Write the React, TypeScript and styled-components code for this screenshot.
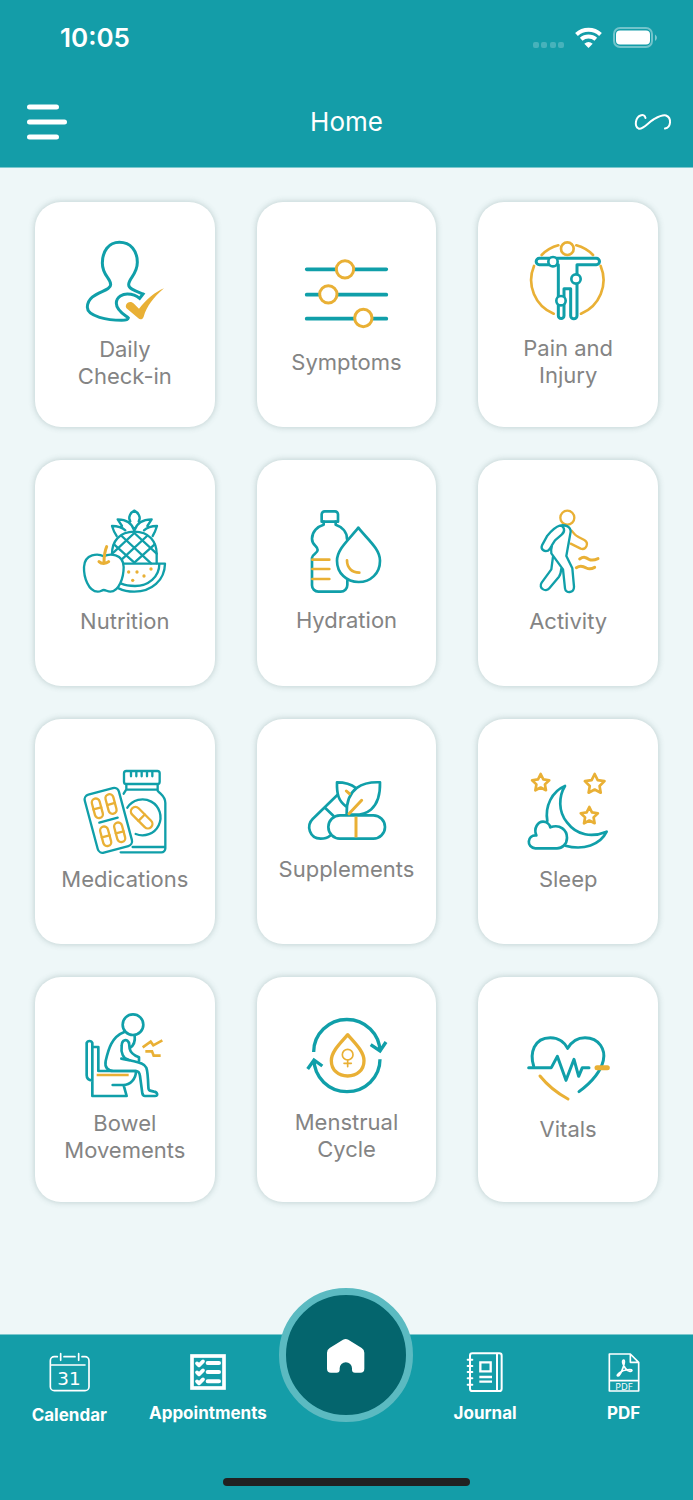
import React from "react";
import styled, { createGlobalStyle } from "styled-components";

const color = {
  teal: "#149da8",
  line: "#109fa9",
  amber: "#e9b035",
  deep: "#04656d",
  ring: "#5bbac1",
  page: "#eef7f8",
  label: "#848484",
  edge: "#7cc8ce",
};

const GlobalStyle = createGlobalStyle`
  * { box-sizing: border-box; }
  body {
    margin: 0;
    background: ${color.page};
    font-family: Inter, "Liberation Sans", sans-serif;
  }
`;

const Screen = styled.div`
  display: flex;
  flex-direction: column;
  min-height: 100vh;
`;

const Header = styled.header`
  background: ${color.teal};
  border-bottom: 1px solid ${color.edge};
  color: #fff;
`;

const StatusBar = styled.div`
  display: flex;
  align-items: center;
  justify-content: space-between;
  height: 76px;
  padding: 0 36px 0 60px;
`;

const Clock = styled.time`
  font-size: 26px;
  font-weight: 600;
  line-height: 32px;
`;

const StatusIcons = styled.div`
  display: flex;
  align-items: center;
  gap: 11px;
`;

const Toolbar = styled.div`
  display: grid;
  grid-template-columns: 1fr auto 1fr;
  align-items: center;
  height: 91px;
  padding: 0 21px;
`;

const IconButton = styled.button<{ $end?: boolean }>`
  display: flex;
  justify-self: ${(p) => (p.$end ? "end" : "start")};
  padding: 0;
  border: 0;
  background: none;
  color: inherit;
  cursor: pointer;
`;

const Title = styled.h1`
  margin: 0;
  font-size: 26px;
  font-weight: 400;
  line-height: 32px;
`;

const Main = styled.main`
  display: flex;
  flex: 1;
  padding: 34px 35px 132px;
`;

const CardGrid = styled.div`
  display: grid;
  flex: 1;
  grid-template-columns: repeat(3, minmax(0, 1fr));
  grid-auto-rows: 1fr;
  gap: 33px 42px;
`;

const Card = styled.button`
  display: flex;
  flex-direction: column;
  align-items: center;
  justify-content: center;
  gap: 12px;
  min-height: 200px;
  padding: 0 20px;
  border: 0;
  border-radius: 26px;
  background: #fff;
  box-shadow: 0 0 6px rgba(60, 100, 100, 0.3);
  color: ${color.label};
  font-family: inherit;
  font-size: 22px;
  line-height: 27px;
  text-align: center;
  cursor: pointer;
`;

const CardLabel = styled.span`
  max-width: 140px;
`;

const Word = styled.span`
  white-space: nowrap;
`;

const Drawing = styled.svg<{ $light?: boolean }>`
  display: block;
  flex: none;
  overflow: visible;
  fill: none;
  stroke: ${(p) => (p.$light ? "#fff" : color.line)};
  stroke-width: 8;
  stroke-linecap: round;
  stroke-linejoin: round;
`;

const TabBar = styled.nav`
  height: 166px;
  background: ${color.teal};
  border-top: 1px solid ${color.edge};
  display: flex;
  flex-direction: column;
  justify-content: space-between;
  align-items: center;
  padding-bottom: 14px;
`;

const Tabs = styled.ul`
  display: grid;
  grid-template-columns: repeat(5, minmax(0, 1fr));
  width: 100%;
  margin: 0;
  padding: 0;
  list-style: none;
`;

const Tab = styled.li`
  position: relative;
  display: flex;
  justify-content: center;
`;

const TabLink = styled.a`
  display: flex;
  flex-direction: column;
  align-items: center;
  gap: 11px;
  padding-top: 17px;
  color: #fff;
  font-size: 17px;
  font-weight: 700;
  line-height: 20px;
  text-decoration: none;
`;

const HomeLink = styled.a`
  position: absolute;
  top: -47px;
  left: 50%;
  transform: translateX(-50%);
  display: flex;
  align-items: center;
  justify-content: center;
  width: 134px;
  height: 134px;
  border: 7px solid ${color.ring};
  border-radius: 50%;
  background: ${color.deep};
`;

const HomeIndicator = styled.div`
  width: 247px;
  height: 8px;
  border-radius: 4px;
  background: #212121;
`;

const Y = { stroke: color.amber };
const dot = { fill: color.amber, stroke: "none" };

const starPoints = (cx: number, cy: number, r: number) =>
  Array.from({ length: 10 }, (_, i) => {
    const radius = i % 2 ? r * 0.5 : r;
    const a = (Math.PI / 5) * i - Math.PI / 2;
    return `${(cx + radius * Math.cos(a)).toFixed(1)},${(cy + radius * Math.sin(a)).toFixed(1)}`;
  }).join(" ");

const Capsule = ({ x, y, w, h, angle }: { x: number; y: number; w: number; h: number; angle: number }) => (
  <g transform={`translate(${x} ${y}) rotate(${angle})`} {...Y}>
    <rect x={-w / 2} y={-h / 2} width={w} height={h} rx={w / 2} />
    <path d={`M${-w / 2} 0H${w / 2}`} />
  </g>
);

type Item = { label: string; viewBox: string; height: number; art: React.ReactNode };

const items: Item[] = [
  {
    label: "Daily Check-in",
    viewBox: "159 136 252 252",
    height: 84,
    art: (
      <>
        <path strokeWidth="9" strokeLinejoin="miter" d="M268 143C236 143 217 170 217 205C217 243 242 250 242 270C242 292 172 292 172 338C172 366 235 377 275 377C288 377 294 375 295 370C290 364 259 350 259 326C259 305 280 298 292 298C306 298 320 303 329 311L339 298C325 292 296 284 296 270C296 250 322 240 322 203C322 168 302 143 268 143Z" />
        <path fill={color.amber} stroke="none" d="M402 281C375 292 350 314 327 342L312 327C304 319 292 321 288 331C286 337 289 341 293 344L325 371C330 376 339 374 341 366C350 335 372 306 402 281Z" />
      </>
    ),
  },
  {
    label: "Symptoms",
    viewBox: "162 173 252 252",
    height: 84,
    art: (
      <>
        <path strokeWidth="11" d="M170 222H409M170 298H409M170 370H409" />
        <g fill="#fff" strokeWidth="9" {...Y}>
          <circle cx="285" cy="222" r="26" />
          <circle cx="235" cy="297" r="26" />
          <circle cx="340" cy="368" r="26" />
        </g>
      </>
    ),
  },
  {
    label: "Pain and Injury",
    viewBox: "162 138 252 246",
    height: 82,
    art: (
      <>
        <g {...Y}>
          <path d="M186 213A109 109 0 0 0 245 356M327 356A109 109 0 0 0 386 213M209 180A109 109 0 0 1 259 151M313 151A109 109 0 0 1 363 180" />
          <circle cx="286" cy="161" r="19" />
        </g>
        <path strokeWidth="9" d="M259 209V362a8.500 8.500 0 0 0 17 0V281H296V362a9.500 9.500 0 0 0 19 0V209H373a9.500 9.500 0 0 0 0-19H202a9.500 9.500 0 0 0 0 19Z" />
        <g fill="#fff">
          <circle cx="243" cy="200" r="14" />
          <circle cx="312" cy="252" r="14" />
          <circle cx="267" cy="317" r="14" />
        </g>
      </>
    ),
  },
  {
    label: "Nutrition",
    viewBox: "159 64 252 258",
    height: 86,
    art: (
      <g strokeWidth="7">
        <path d="M246 196C246 158 268 129 313 129C358 129 380 160 380 196V224" />
        <path d="M252 167L313 222M275 142L363 224M313 133L380 195M374 167L313 222M351 142L265 222M313 133L250 192" />
        <path d="M301 98C292 85 303 71 313 66C323 71 335 85 326 98M313 126C306 103 288 92 263 92L276 112M313 126C320 103 340 92 365 92L352 112M286 125C275 115 262 112 246 112C250 125 253 133 260 142M342 125C352 115 365 112 381 112C377 125 374 133 368 142" />
        <path d="M278 225H405C404 275 365 309 313 309C295 309 278 305 266 299M388 226C388 265 355 292 315 292C300 292 285 290 274 285" />
        <path fill="#fff" d="M221 203C205 194 164 194 162 235C161 265 175 309 203 309C213 309 215 304 221 304C228 304 232 309 241 309C268 309 281 265 281 235C280 194 238 194 221 203Z" />
        <path {...Y} strokeWidth="9" d="M230 174C224 188 222 200 222 222M207 219C214 226 228 226 236 219" />
        <g {...dot}>
          <circle cx="296" cy="250" r="5" />
          <circle cx="321" cy="250" r="5" />
          <circle cx="363" cy="241" r="5" />
          <circle cx="342" cy="262" r="5" />
          <circle cx="308" cy="275" r="5" />
        </g>
      </g>
    ),
  },
  {
    label: "Hydration",
    viewBox: "162 65 252 252",
    height: 84,
    art: (
      <>
        <path d="M215 97V75a9 9 0 0 1 9-9H255a9 9 0 0 1 9 9V97Z" />
        <path d="M221 97V106C203 111 186 127 186 148C186 170 203 168 203 182C203 192 186 196 186 205V288a19 19 0 0 0 19 19H272a20 20 0 0 0 20-20V274M257 97V106C275 112 291 127 291 149" />
        <path {...Y} d="M187 211H238M187 239H238M187 269H238M291 213C291 235 305 250 328 250" />
        <path d="M325 115C300 148 261 178 261 214C261 252 290 278 326 278C362 278 390 252 390 214C390 178 350 148 325 115Z" />
      </>
    ),
  },
  {
    label: "Activity",
    viewBox: "829 62 252 258",
    height: 86,
    art: (
      <g strokeWidth="7">
        <g {...Y}>
          <circle cx="953" cy="85" r="21" />
          <path d="M966 124C972 132 978 139 985 142L1004 152C1019 161 1010 183 993 178L963 163" />
          <path strokeWidth="9" d="M990 209C1003 200 1010 205 1018 210C1028 215 1036 212 1045 208M980 235C993 226 1002 231 1010 236C1018 240 1026 239 1035 234" />
        </g>
        <path d="M930 109C918 112 905 125 893 139L877 168C872 180 884 188 895 184C901 181 903 175 906 169L916 153L936 136C949 125 943 109 930 109C945 105 963 111 963 127L950 200L968 237L973 292C973 312 948 313 946 297L940 240L905 192C904 185 904 178 907 168" />
        <path d="M910 202L905 240L876 280C865 296 888 310 899 297L928 262C933 255 934 248 935 238" />
      </g>
    ),
  },
  {
    label: "Medications",
    viewBox: "159 59 252 252",
    height: 84,
    art: (
      <g strokeWidth="7">
        <rect x="282" y="62" width="107" height="39" rx="7" />
        <path d="M303 64V78M319 64V78M335 64V78M351 64V78M367 64V78" />
        <path d="M289 103V117L281 130M290 118H383M383 103V121C394 134 406 138 406 158V294a12 12 0 0 1-12 12H272M308 290H406" />
        <path d="M292 172A54 54 0 1 1 317 251" />
        <Capsule x={335} y={202} w={27} h={80} angle={-45} />
        <rect x="-53" y="-90" width="106" height="180" rx="15" transform="translate(235 210) rotate(-15)" />
        <path d="M208 217L263 202" />
        <Capsule x={202} y={174} w={24} h={60} angle={-15} />
        <Capsule x={243} y={161} w={24} h={60} angle={-15} />
        <Capsule x={227} y={258} w={24} h={60} angle={-15} />
        <Capsule x={269} y={246} w={24} h={60} angle={-15} />
      </g>
    ),
  },
  {
    label: "Supplements",
    viewBox: "822 90 252 195",
    height: 65,
    art: (
      <>
        <path d="M922 138L848 210C828 230 838 268 872 269C885 269 893 266 900 260M885 176L910 200" />
        <rect x="895" y="199" width="170" height="70" rx="35" />
        <path {...Y} strokeLinecap="butt" strokeWidth="9" d="M978 203V265" />
        <path d="M1050 100C1000 98 948 115 950 195C1010 205 1052 180 1050 100ZM978 117C960 103 940 100 921 100C920 135 925 155 948 172" />
        <path {...Y} strokeWidth="9" d="M957 194L995 154M949 126L958 134" />
      </>
    ),
  },
  {
    label: "Sleep",
    viewBox: "162 61 252 252",
    height: 84,
    art: (
      <>
        <path d="M226 214C218 170 240 125 279 109C260 140 258 185 285 218C315 258 360 264 404 246C385 285 335 303 280 288" />
        <path d="M190 296C162 294 165 255 193 257C184 235 198 216 213 216C225 216 233 225 235 233C265 222 285 242 285 264C285 284 270 296 255 296Z" />
        <g {...Y}>
          <polygon points={starPoints(206, 100, 27)} />
          <polygon points={starPoints(368, 104, 31)} />
          <polygon points={starPoints(352, 199, 27)} />
        </g>
      </>
    ),
  },
  {
    label: "Bowel Movements",
    viewBox: "159 44 252 252",
    height: 84,
    art: (
      <>
        <circle cx="309" cy="76" r="31" />
        <path d="M187 243C175 243 170 238 170 228V131a9 9 0 0 1 17 0V290H290L281 258M187 143H205V215H318C318 240 300 257 280 257H248" />
        <path d="M283 98C245 112 235 150 227 185C223 205 235 215 250 215H318C328 215 329 222 330 230L337 282C338 288 340 290 345 290H375C386 290 382 278 372 277L360 274C355 272 355 268 355 262C354 235 353 215 349 205C343 190 318 188 300 183L274 178" />
        <path d="M297 132C293 117 275 120 275 140C272 160 280 178 294 181M297 130L299 148C302 162 312 168 327 174V184M314 109C316 125 312 138 300 146" />
        <path {...Y} strokeLinecap="butt" strokeLinejoin="miter" d="M200 227H296M338 144L362 127L370 138L397 123M346 156H366L371 169H392" />
      </>
    ),
  },
  {
    label: "Menstrual Cycle",
    viewBox: "162 50 252 243",
    height: 81,
    art: (
      <>
        <path strokeWidth="10" strokeLinecap="butt" strokeLinejoin="miter" d="M191 158A99 97 0 0 1 390 158M390 180A99 97 0 0 1 192 180M362 136L390 155L408 128M173 209L192 182L217 200" />
        <path {...Y} strokeWidth="10" d="M293 106C275 128 244 155 244 184C244 212 265 230 293 230C321 230 342 212 342 184C342 155 311 128 293 106Z" />
        <g {...Y} strokeWidth="5">
          <circle cx="293" cy="166" r="16" />
          <path d="M293 182V202M282 192H304" />
        </g>
      </>
    ),
  },
  {
    label: "Vitals",
    viewBox: "829 112 252 204",
    height: 68,
    art: (
      <>
        <path strokeWidth="9" d="M852 202C840 165 852 117 902 117C930 117 947 135 954 149C962 135 978 117 1006 117C1050 117 1068 155 1061 185C1052 225 1020 255 988 279" />
        <path strokeWidth="9" d="M837 207H905L923 173L949 245L973 182L987 233L998 207H1018" />
        <path {...Y} strokeWidth="9" d="M871 232C895 262 920 282 955 301" />
        <path {...Y} strokeWidth="15" d="M1042 207H1073" />
      </>
    ),
  },
];

type TabItem = { label: string; viewBox: string; size: number; art: React.ReactNode };

const leftTabs: TabItem[] = [
  {
    label: "Calendar",
    viewBox: "145 216 126 126",
    size: 42,
    art: (
      <g strokeWidth="5">
        <path d="M173 230H164a12 12 0 0 0-12 12V320a12 12 0 0 0 12 12H256a12 12 0 0 0 12-12V242a12 12 0 0 0-12-12H247M193 230H226M183 221V241M237 221V241M156 255H256" />
        <text x="208" y="316" textAnchor="middle" fontFamily="DejaVu Sans, sans-serif" fontSize="55" fontWeight="400" fill="#fff" stroke="none">
          31
        </text>
      </g>
    ),
  },
  {
    label: "Appointments",
    viewBox: "564 216 120 120",
    size: 40,
    art: (
      <>
        <rect x="576" y="228" width="96" height="96" strokeWidth="11" strokeLinejoin="miter" />
        <path strokeWidth="12" d="M623 249H657M623 276H657M623 304H657" />
        <path strokeWidth="11" d="M591 250L597 256L609 244M591 277L597 283L609 271M591 304L597 310L609 298" />
      </>
    ),
  },
];

const rightTabs: TabItem[] = [
  {
    label: "Journal",
    viewBox: "195 96 120 120",
    size: 40,
    art: (
      <g strokeWidth="6">
        <rect x="210" y="100" width="95" height="113" rx="7" />
        <path d="M291 101V212M203 119H217M203 138H217M203 156H217M203 175H217M203 194H217" />
        <path strokeWidth="7" strokeLinecap="butt" strokeLinejoin="miter" d="M241 127H272V154H241ZM238 171H276M238 185H276" />
      </g>
    ),
  },
  {
    label: "PDF",
    viewBox: "611 96 120 120",
    size: 40,
    art: (
      <g strokeWidth="5">
        <path d="M627 102H690L715 127V213H627ZM690 102V127H715M627 182H715" />
        <path strokeWidth="5" d="M670 120C663 121 669 137 675 145C681 154 695 157 695 151C694 146 670 150 661 156C652 161 648 168 653 168C662 166 678 121 670 120Z" />
        <text x="671" y="209" textAnchor="middle" fontFamily="Noto Sans, sans-serif" fontSize="28" fontWeight="400" fill="#fff" stroke="none">
          PDF
        </text>
      </g>
    ),
  },
];

const NavTab = ({ tab }: { tab: TabItem }) => (
  <Tab>
    <TabLink href={`#${tab.label.toLowerCase()}`}>
      <Drawing $light viewBox={tab.viewBox} width={tab.size} height={tab.size} aria-hidden="true">
        {tab.art}
      </Drawing>
      {tab.label}
    </TabLink>
  </Tab>
);

export default function App() {
  return (
    <Screen>
      <GlobalStyle />
      <Header>
        <StatusBar>
          <Clock>10:05</Clock>
          <StatusIcons>
            <svg width="31" height="22" viewBox="0 0 31 22" fill="#fff" fillOpacity=".22" aria-hidden="true">
              <rect x="0" y="15" width="6" height="6" rx="2" />
              <rect x="8" y="15" width="6" height="6" rx="2" />
              <rect x="17" y="15" width="6" height="6" rx="2" />
              <rect x="25" y="15" width="6" height="6" rx="2" />
            </svg>
            <svg width="27" height="22" viewBox="0 0 27 22" aria-hidden="true">
              <g fill="none" stroke="#fff" strokeWidth="4">
                <path d="M1.500 7.500A17.500 17.500 0 0 1 25.500 7.500" />
                <path d="M6.200 12.300A11 11 0 0 1 20.800 12.300" />
              </g>
              <path fill="#fff" d="M13.500 21L9.300 16.700A6.500 6.500 0 0 1 17.700 16.700Z" />
            </svg>
            <svg width="44" height="22" viewBox="0 0 44 22" aria-hidden="true">
              <rect x="1" y="1" width="38" height="19" rx="6" fill="none" stroke="#fff" strokeOpacity=".4" strokeWidth="2" />
              <rect x="3" y="3.500" width="34" height="14" rx="4" fill="#fff" />
              <path d="M42 7.500C44.500 9 44.500 12.500 42 14Z" fill="#fff" fillOpacity=".45" />
            </svg>
          </StatusIcons>
        </StatusBar>
        <Toolbar>
          <IconButton type="button" aria-label="Menu">
            <svg width="47" height="36" viewBox="0 0 47 36" stroke="#fff" strokeWidth="5" strokeLinecap="round">
              <path d="M8.500 3H35.500M8.500 18H43.500M8.500 33H35.500" />
            </svg>
          </IconButton>
          <Title>Home</Title>
          <IconButton type="button" aria-label="Connections" $end>
            <svg width="38" height="18" viewBox="0 0 38 18" fill="none" stroke="#fff" strokeWidth="2" strokeLinecap="round">
              <path d="M11.500 5C11 2.500 9 1.500 6.500 2.500C1.500 4.500 0 13 4.500 15.500C9 17 14 9.500 19.500 6.500C24 4 28 1.500 32 2.500C38 5 37 14.500 31 15.500" />
            </svg>
          </IconButton>
        </Toolbar>
      </Header>

      <Main>
        <CardGrid>
          {items.map((item) => (
            <Card key={item.label} type="button">
              <Drawing viewBox={item.viewBox} width={84} height={item.height} aria-hidden="true">
                {item.art}
              </Drawing>
              <CardLabel>
                {item.label.split(" ").map((word, i) => (
                  <React.Fragment key={word}>
                    {i > 0 && " "}
                    <Word>{word}</Word>
                  </React.Fragment>
                ))}
              </CardLabel>
            </Card>
          ))}
        </CardGrid>
      </Main>

      <TabBar aria-label="Main">
        <Tabs>
          {leftTabs.map((tab) => (
            <NavTab key={tab.label} tab={tab} />
          ))}
          <Tab>
            <HomeLink href="#home" aria-label="Home">
              <svg width="40" height="40" viewBox="979 165 120 120" fill="#fff" aria-hidden="true">
                <path d="M1030 179Q1038 175 1046 179L1086 204Q1094 209 1094 218V266Q1094 278 1082 278H1066Q1057 278 1057 269V265a18.500 18.500 0 0 0-37 0V269Q1020 278 1011 278H994Q982 278 982 266V218Q982 209 990 204Z" />
              </svg>
            </HomeLink>
          </Tab>
          {rightTabs.map((tab) => (
            <NavTab key={tab.label} tab={tab} />
          ))}
        </Tabs>
        <HomeIndicator />
      </TabBar>
    </Screen>
  );
}
